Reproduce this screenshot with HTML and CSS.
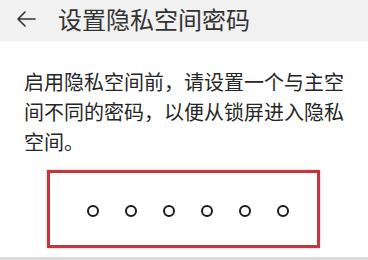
FILE: index.html
```html
<!DOCTYPE html>
<html lang="zh-CN">
<head>
<meta charset="utf-8">
<link rel="stylesheet" href="styles.css">
</head>
<body>
<header class="bar">
  <svg class="back" width="20" height="18" viewBox="0 0 20 18">
    <path d="M19 9H2M9 2L2 9l7 7" fill="none" stroke="#333" stroke-width="1.6" stroke-linecap="round" stroke-linejoin="round"/>
  </svg>
  <h1 class="title">设置隐私空间密码</h1>
</header>
<p class="desc">启用隐私空间前，请设置一个与主空间不同的密码，以便从锁屏进入隐私空间。</p>
<div class="pin">
  <span class="dot"></span><span class="dot"></span><span class="dot"></span><span class="dot"></span><span class="dot"></span><span class="dot"></span>
</div>
<div class="foot"></div>
</body>
</html>
```
FILE: styles.css
```css
html, body {
  margin: 0;
  padding: 0;
  background: #fff;
  width: 368px;
  height: 260px;
  overflow: hidden;
  font-family: "Noto Sans CJK SC", "Noto Sans", sans-serif;
  color: #262626;
}
.bar {
  height: 41px;
  background: #f1f1f1;
  display: flex;
  align-items: center;
  padding-left: 16px;
  box-sizing: border-box;
}
.back {
  display: block;
  margin-right: 22px;
  margin-top: -4px;
}
.title {
  margin: 0;
  font-size: 24px;
  font-weight: 400;
  line-height: 1;
  margin-top: -4px;
  color: #333;
}
.desc {
  margin: 26px 24px 0 24px;
  font-size: 20px;
  line-height: 30px;
}
.pin {
  margin: 13px 0 0 47px;
  width: 273px;
  height: 78px;
  box-sizing: border-box;
  border: 3px solid #c4363e;
  box-shadow: 0 0 2px rgba(180, 40, 50, 0.4);
  display: flex;
  align-items: flex-start;
  gap: 26px;
  padding: 32px 0 0 37px;
}
.dot {
  width: 12px;
  height: 12px;
  box-sizing: border-box;
  border: 2px solid #1a1a1a;
  border-radius: 50%;
  display: block;
}
.foot {
  margin-top: 9px;
  height: 3px;
  background: #dcdcdc;
}
```
